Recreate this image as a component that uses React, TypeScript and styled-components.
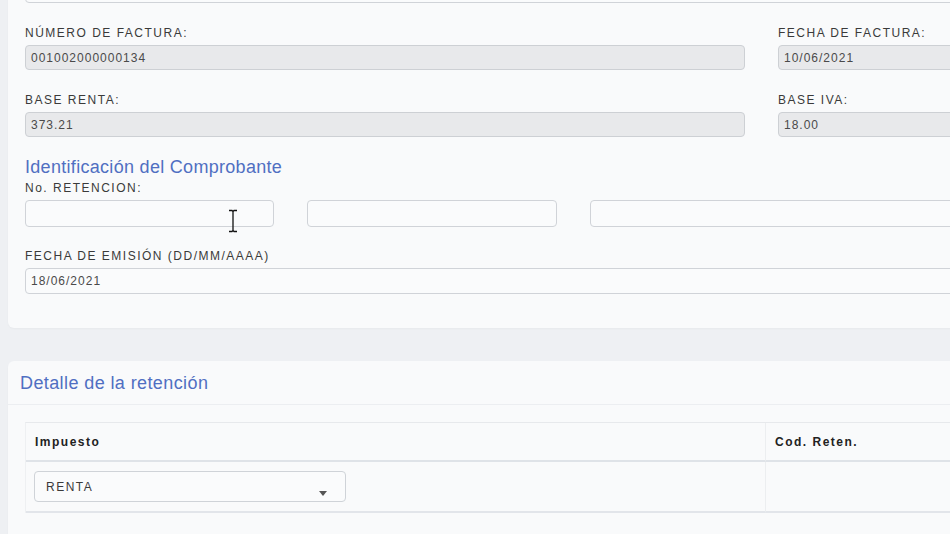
import styled, { createGlobalStyle } from 'styled-components'

const GlobalStyle = createGlobalStyle`
  html, body {
    margin: 0;
    padding: 0;
    background: #eef0f3;
    overflow: hidden;
    font-family: "Liberation Sans", Arial, sans-serif;
  }
`

const Page = styled.div`
  width: 950px;
  height: 534px;
  overflow: hidden;
  padding-left: 8px;
  box-sizing: border-box;
  position: relative;
`

const Card = styled.section<{ $top?: number }>`
  width: 1200px;
  background: #f9fafb;
  border-radius: 6px;
  box-shadow: 0 1px 2px rgba(0, 0, 0, 0.03);
  margin-top: ${p => p.$top ?? 0}px;
  box-sizing: border-box;
`

const CardBody = styled.div<{ $pt: number; $pb: number }>`
  padding: ${p => p.$pt}px 17px ${p => p.$pb}px 17px;
  display: flex;
  flex-direction: column;
`

const Row = styled.div<{ $cols: string; $mt?: number }>`
  display: grid;
  grid-template-columns: ${p => p.$cols};
  column-gap: 33px;
  margin-top: ${p => p.$mt ?? 0}px;
`

const Field = styled.div<{ $mt?: number }>`
  display: flex;
  flex-direction: column;
  margin-top: ${p => p.$mt ?? 0}px;
`

const Label = styled.label`
  font-size: 12px;
  line-height: 16px;
  letter-spacing: 1.5px;
  color: #3a3a3a;
  margin-bottom: 4px;
`

const Input = styled.div<{ $readonly?: boolean; $h?: number }>`
  height: ${p => p.$h ?? 25}px;
  box-sizing: border-box;
  border: 1px solid ${p => (p.$readonly ? '#cdd0d4' : '#d0d3d8')};
  border-radius: 4px;
  background: ${p => (p.$readonly ? '#e8e9eb' : '#fafbfc')};
  font-size: 12px;
  letter-spacing: 1px;
  color: #4a4a4a;
  padding: 0 5px;
  display: flex;
  align-items: center;
`

const SectionTitle = styled.h3`
  margin: 19px 0 2px 0;
  font-size: 18px;
  font-weight: 400;
  line-height: 22px;
  letter-spacing: 0.3px;
  color: #506fc2;
`

const CardHeader = styled.div`
  padding: 11px 12px 10px 12px;
  border-bottom: 1px solid #eceef1;
`

const HeaderTitle = styled.h2`
  margin: 0;
  font-size: 18px;
  font-weight: 400;
  line-height: 22px;
  letter-spacing: 0.4px;
  color: #506fc2;
`

const Table = styled.div`
  display: grid;
  grid-template-columns: 740px 1fr;
  border-top: 1px solid #e7e9ec;
  border-left: 1px solid #eef0f2;
`

const HeadCell = styled.div<{ $last?: boolean }>`
  height: 37px;
  display: flex;
  align-items: center;
  padding-left: 9px;
  font-size: 12px;
  font-weight: 700;
  letter-spacing: 1.5px;
  color: #222;
  border-bottom: 2px solid #dfe3e8;
  border-right: ${p => (p.$last ? 'none' : '1px solid #eceef0')};
`

const BodyCell = styled.div<{ $last?: boolean }>`
  height: 49px;
  display: flex;
  align-items: center;
  padding-left: 8px;
  border-bottom: 2px solid #e2e5ea;
  border-right: ${p => (p.$last ? 'none' : '1px solid #eceef0')};
`

const Select = styled.div`
  width: 312px;
  height: 31px;
  box-sizing: border-box;
  border: 1px solid #cfd3d8;
  border-radius: 4px;
  background: #fafbfc;
  position: relative;
  padding: 8px 0 0 11px;
  font-size: 12px;
  letter-spacing: 1.5px;
  color: #3a3a3a;
`

const Caret = styled.span`
  position: absolute;
  right: 18px;
  bottom: 5px;
  width: 0;
  height: 0;
  border-left: 4px solid transparent;
  border-right: 4px solid transparent;
  border-top: 5px solid #555;
`

const Cursor = styled.svg`
  position: absolute;
  left: 228px;
  top: 209px;
`

export default function App() {
  return (
    <Page>
      <GlobalStyle />
      <Card $top={-60}>
        <CardBody $pt={37} $pb={34}>
          <Input $h={26} />
          <Row $cols="720px 1fr" $mt={22}>
            <Field>
              <Label>NÚMERO DE FACTURA:</Label>
              <Input $readonly>001002000000134</Input>
            </Field>
            <Field>
              <Label>FECHA DE FACTURA:</Label>
              <Input $readonly>10/06/2021</Input>
            </Field>
          </Row>
          <Row $cols="720px 1fr" $mt={22}>
            <Field>
              <Label>BASE RENTA:</Label>
              <Input $readonly>373.21</Input>
            </Field>
            <Field>
              <Label>BASE IVA:</Label>
              <Input $readonly>18.00</Input>
            </Field>
          </Row>
          <SectionTitle>Identificación del Comprobante</SectionTitle>
          <Label>No. RETENCION:</Label>
          <Row $cols="249px 250px 1fr">
            <Input $h={27} />
            <Input $h={27} />
            <Input $h={27} />
          </Row>
          <Field $mt={21}>
            <Label>FECHA DE EMISIÓN (DD/MM/AAAA)</Label>
            <Input $h={26}>18/06/2021</Input>
          </Field>
        </CardBody>
      </Card>
      <Card $top={33}>
        <CardHeader>
          <HeaderTitle>Detalle de la retención</HeaderTitle>
        </CardHeader>
        <CardBody $pt={17} $pb={40}>
          <Table>
            <HeadCell>Impuesto</HeadCell>
            <HeadCell $last>Cod. Reten.</HeadCell>
            <BodyCell>
              <Select>
                RENTA
                <Caret />
              </Select>
            </BodyCell>
            <BodyCell $last />
          </Table>
        </CardBody>
      </Card>
      <Cursor width="10" height="24" viewBox="0 0 10 24">
        <path d="M1 1.5h3l1 1 1-1h3M5 2.5v19M1 22.5h3l1-1 1 1h3" stroke="#111" strokeWidth="1.3" fill="none" />
      </Cursor>
    </Page>
  )
}
